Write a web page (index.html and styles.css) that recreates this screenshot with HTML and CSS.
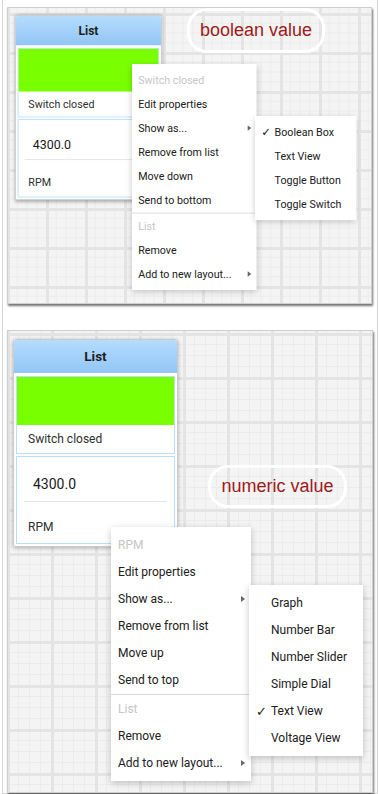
FILE: index.html
```html
<!DOCTYPE html>
<html>
<head>
    <meta charset="UTF-8">
    <meta name="viewport" content="width=device-width, initial-scale=1.0">
    <title>Shuffleboard - Show as</title>
    <link rel="stylesheet" href="styles.css">
</head>
<body>
    <div class="page">
        <!-- boolean value -->
        <div class="panel panel-bool">
            <div class="list">
                <div class="list-title">List</div>
                <div class="list-body">
                    <div class="tile">
                        <div class="bool-box"></div>
                        <div class="tile-label">Switch closed</div>
                    </div>
                    <div class="tile tile-number">
                        <div class="text-field">4300.0</div>
                        <div class="tile-label">RPM</div>
                    </div>
                </div>
            </div>

            <div class="note note-bool">boolean value</div>

            <ul class="menu menu-bool">
                <li class="disabled">Switch closed</li>
                <li>Edit properties</li>
                <li>Show as...<span class="arrow"></span></li>
                <li>Remove from list</li>
                <li>Move down</li>
                <li>Send to bottom</li>
                <li class="separator"></li>
                <li class="disabled">List</li>
                <li>Remove</li>
                <li>Add to new layout...<span class="arrow"></span></li>
            </ul>

            <ul class="menu submenu submenu-bool">
                <li><span class="check">✓</span>Boolean Box</li>
                <li>Text View</li>
                <li>Toggle Button</li>
                <li>Toggle Switch</li>
            </ul>
        </div>

        <!-- numeric value -->
        <div class="panel panel-num">
            <div class="list">
                <div class="list-title">List</div>
                <div class="list-body">
                    <div class="tile">
                        <div class="bool-box"></div>
                        <div class="tile-label">Switch closed</div>
                    </div>
                    <div class="tile tile-number">
                        <div class="text-field">4300.0</div>
                        <div class="tile-label">RPM</div>
                    </div>
                </div>
            </div>

            <div class="note note-num">numeric value</div>

            <ul class="menu menu-num">
                <li class="disabled">RPM</li>
                <li>Edit properties</li>
                <li>Show as...<span class="arrow"></span></li>
                <li>Remove from list</li>
                <li>Move up</li>
                <li>Send to top</li>
                <li class="separator"></li>
                <li class="disabled">List</li>
                <li>Remove</li>
                <li>Add to new layout...<span class="arrow"></span></li>
            </ul>

            <ul class="menu submenu submenu-num">
                <li>Graph</li>
                <li>Number Bar</li>
                <li>Number Slider</li>
                <li>Simple Dial</li>
                <li><span class="check">✓</span>Text View</li>
                <li>Voltage View</li>
            </ul>
        </div>
    </div>
</body>
</html>
```

FILE: styles.css
```css
* {
    box-sizing: border-box;
}

body {
    margin: 0;
    background: #fff;
    font-family: Roboto, "Noto Sans", sans-serif;
    color: #222;
}

.page {
    margin-left: 2px;
    width: 376px;
    height: 794px;
    padding: 7px 0 0 4px;
    border-left: 1px solid #d6d6d6;
    border-right: 1px solid #d6d6d6;
    border-bottom: 1px solid #d6d6d6;
}

/* screenshot frame with the dashboard grid */
.panel {
    position: relative;
    overflow: hidden;
    border: 1px solid #cfcfcf;
    box-shadow: 1px 2px 2px rgba(0, 0, 0, 0.55);
    background-color: #f4f4f4;
    background-image:
        linear-gradient(to right, #e4e4e4 3px, transparent 3px),
        linear-gradient(to bottom, #e4e4e4 3px, transparent 3px),
        linear-gradient(to right, #ececec 1px, transparent 1px),
        linear-gradient(to bottom, #ececec 1px, transparent 1px);
}

.panel-bool {
    width: 365px;
    height: 297px;
    padding: 7px 0 0 7px;
    background-size: 39px 39px, 39px 39px, 9.75px 9.75px, 9.75px 9.75px;
    background-position: -1px 5px;
}

.panel-num {
    margin-top: 26px;
    width: 366px;
    height: 463px;
    padding: 8px 0 0 5px;
    background-size: 44px 44px, 44px 44px, 11px 11px, 11px 11px;
    background-position: -1px 2px;
}

/* panel one is a smaller screenshot */
.panel-bool .list,
.panel-bool .menu {
    transform: scale(0.89);
    transform-origin: 0 0;
}

/* list layout widget */
.list {
    width: 165px;
    border: 1px solid #c8ccd0;
    border-radius: 3px 3px 2px 2px;
    background: #fdfdfd;
    box-shadow: 0 1px 4px rgba(0, 0, 0, 0.3);
}

.list-title {
    height: 33px;
    line-height: 33px;
    text-align: center;
    font-size: 13.5px;
    font-weight: 700;
    color: #1e1e1e;
    background: linear-gradient(#b5dcfd 0%, #92c6f6 100%);
    border-radius: 2px 2px 0 0;
}

.list-body {
    padding: 3px 2px 2px;
}

.tile {
    border: 1px solid #bcdff7;
    background: #fff;
}

.tile + .tile {
    margin-top: 2px;
}

.bool-box {
    height: 48px;
    background: #78ff00;
}

.tile-label {
    height: 28px;
    line-height: 28px;
    padding-left: 11px;
    font-size: 12px;
    color: #2e2e2e;
}

.tile-number {
    padding: 11px 0 2px;
}

.tile-number .tile-label {
    margin-top: 11px;
}

.text-field {
    height: 34px;
    line-height: 33px;
    margin: 0 7px;
    padding-left: 9px;
    font-size: 14px;
    color: #1a1a1a;
    border-bottom: 1px solid #e4e4e4;
}

/* annotation bubbles */
.note {
    position: absolute;
    border: 3px solid #fff;
    border-radius: 20px;
    font-family: "Liberation Sans", Arial, sans-serif;
    font-size: 18px;
    color: #9e1a1a;
    text-align: center;
}

.note-bool {
    left: 179px;
    top: 0;
    width: 138px;
    height: 45px;
    line-height: 39px;
}

.note-num {
    left: 200px;
    top: 134px;
    width: 139px;
    height: 43px;
    line-height: 37px;
}

/* context menus */
.menu {
    position: absolute;
    margin: 0;
    padding: 5px 0 4px;
    list-style: none;
    width: 140px;
    background: #fff;
    box-shadow: 0 2px 7px rgba(0, 0, 0, 0.22);
}

.menu li {
    position: relative;
    height: 27px;
    line-height: 27px;
    padding-left: 7px;
    font-size: 12px;
    color: #202020;
    white-space: nowrap;
}

.menu li.disabled {
    color: #c6c6c6;
}

.menu li.separator {
    height: 1px;
    margin-bottom: 1px;
    background: #dadada;
}

.arrow {
    position: absolute;
    right: 6px;
    top: 10px;
    width: 0;
    height: 0;
    border-top: 3.5px solid transparent;
    border-bottom: 3.5px solid transparent;
    border-left: 4px solid #666;
}

.submenu {
    width: 114px;
}

.submenu li {
    padding-left: 22px;
}

.check {
    position: absolute;
    left: 7px;
    top: 0;
    font-family: "DejaVu Sans", sans-serif;
    font-size: 13px;
    color: #222;
}

.menu-bool {
    left: 124px;
    top: 56px;
}

.submenu-bool {
    left: 247px;
    top: 108px;
}

.menu-num {
    left: 103px;
    top: 196px;
}

.submenu-num {
    left: 241px;
    top: 254px;
}
```
